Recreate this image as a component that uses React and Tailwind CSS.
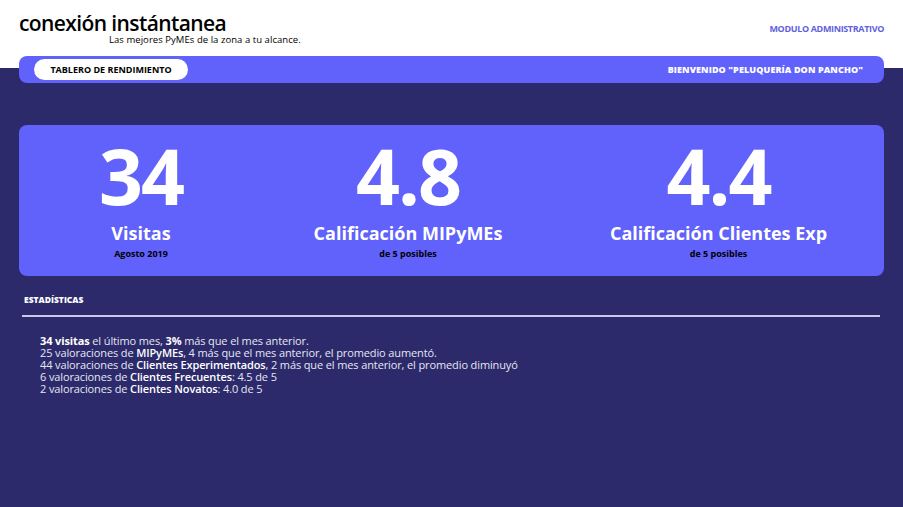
export default function App() {
  const font = { fontFamily: '"Open Sans", "Noto Sans", sans-serif' };
  return (
    <div className="w-[903px] h-[507px] bg-[#2c2a6a] overflow-hidden relative" style={font}>
      {/* white header */}
      <div className="bg-white h-[68px] px-[19px] pt-[9px] flex justify-between">
        <div>
          <div className="text-[21px] leading-[28px] font-semibold text-black tracking-[-0.6px]">conexión instántanea</div>
          <div className="ml-[90px] -mt-[2px] text-[9.5px] leading-[10px] text-black tracking-[0.05px]">Las mejores PyMEs de la zona a tu alcance.</div>
        </div>
        <div className="text-[9px] font-bold text-[#5f5fe0] mt-[13px] tracking-[-0.35px]">MODULO ADMINISTRATIVO</div>
      </div>
      {/* bar overlapping */}
      <div className="absolute left-[19px] top-[56px] w-[865px] h-[27px] bg-[#6062fb] rounded-[8px] flex items-center justify-between pl-[15px] pr-[21px]">
        <div className="bg-white rounded-full h-[21px] w-[154px] flex items-center justify-center text-[9px] font-bold text-black">TABLERO DE RENDIMIENTO</div>
        <div className="text-[9px] font-extrabold text-white tracking-[0.1px]">BIENVENIDO "PELUQUERÍA DON PANCHO"</div>
      </div>
      {/* card */}
      <div className="mx-[19px] mt-[57px] h-[151px] bg-[#6062fb] rounded-[8px] grid grid-cols-[244px_290px_331px]">
        <Stat value="34" label="Visitas" sub="Agosto 2019" />
        <Stat value="4.8" label="Calificación MIPyMEs" sub="de 5 posibles" />
        <Stat value="4.4" label="Calificación Clientes Exp" sub="de 5 posibles" />
      </div>
      {/* stats */}
      <div className="ml-[24px] mt-[19px] text-[8.5px] font-extrabold text-white leading-[10px]">ESTADÍSTICAS</div>
      <div className="mx-[22px] mt-[10px] w-[858px] h-[2px] bg-[#c9c9e2]"></div>
      <div className="ml-[40px] mt-[18px] text-[11px] leading-[12px] text-[#e6e6f2] tracking-[-0.12px]">
        <div><b className="font-bold text-white">34 visitas</b> el último mes, <b className="font-bold text-white">3%</b> más que el mes anterior.</div>
        <div>25 valoraciones de <b className="font-semibold text-white">MIPyMEs</b>, 4 más que el mes anterior, el promedio aumentó.</div>
        <div>44 valoraciones de <b className="font-semibold text-white">Clientes Experimentados</b>, 2 más que el mes anterior, el promedio diminuyó</div>
        <div>6 valoraciones de <b className="font-semibold text-white">Clientes Frecuentes</b>: 4.5 de 5</div>
        <div>2 valoraciones de <b className="font-semibold text-white">Clientes Novatos</b>: 4.0 de 5</div>
      </div>
    </div>
  );
}

function Stat({ value, label, sub }) {
  return (
    <div className="flex flex-col items-center pt-[9px]">
      <div className="text-[77px] leading-[84px] font-bold text-white tracking-[-2px]">{value}</div>
      <div className="mt-[3px] text-[18px] leading-[24px] font-bold text-white">{label}</div>
      <div className="mt-[4px] text-[9px] leading-[10px] font-bold text-black">{sub}</div>
    </div>
  );
}
